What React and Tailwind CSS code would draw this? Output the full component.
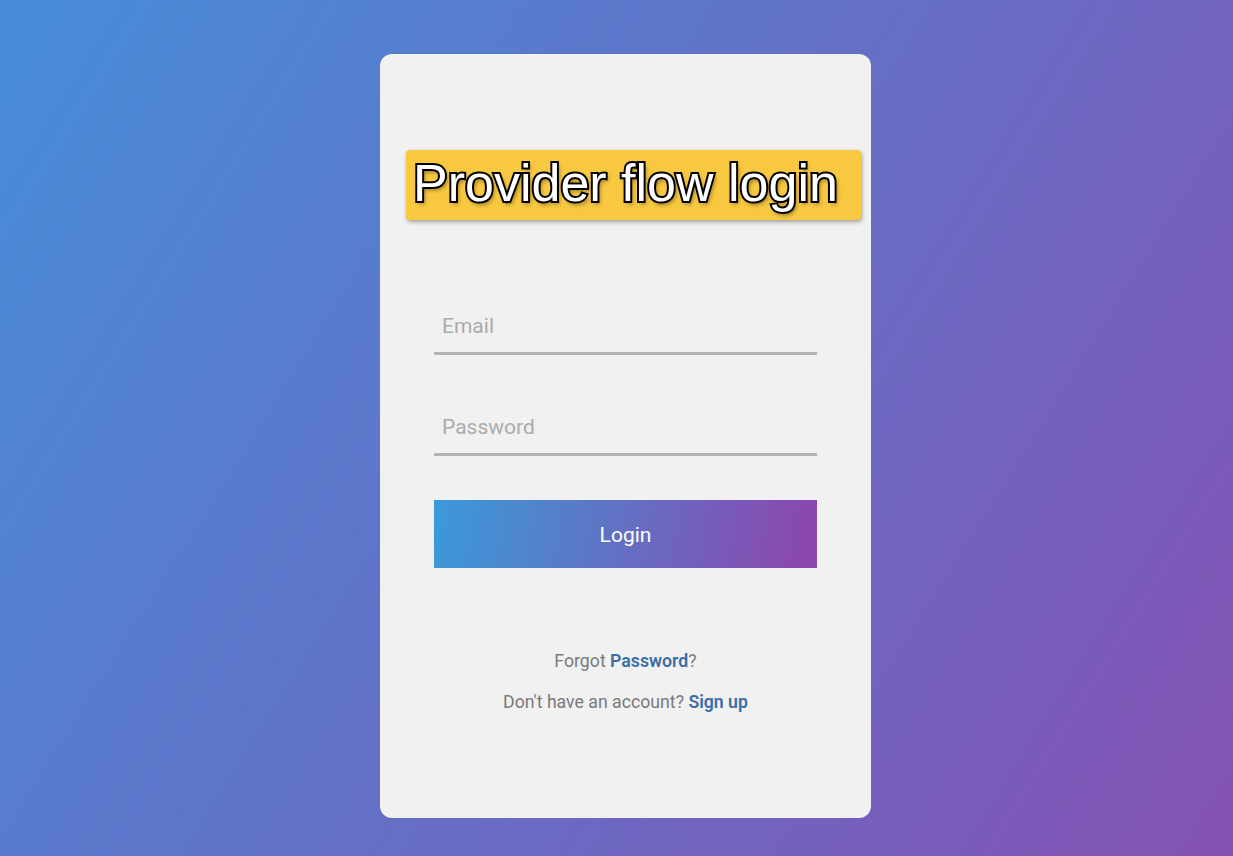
export default function App() {
  return (
    <div className="w-full h-[856px] bg-[linear-gradient(122deg,#468dd8,#8452b4)] flex justify-center pl-[18px] pt-[54px] font-['Roboto',sans-serif] overflow-hidden">
      <div className="w-[491px] h-[764px] bg-[#f1f1f1] rounded-[12px] flex flex-col pt-[96px]">
        {/* title banner */}
        <div className="ml-[26px] mr-[10px] h-[70px] bg-[#f8c840] rounded-[4px] shadow-[1px_2px_4px_rgba(0,0,0,0.35)] flex items-center pl-[7px] pb-[5px]">
          <span className="whitespace-nowrap font-['Liberation_Sans',Arial,sans-serif] text-[52px] leading-none text-white [-webkit-text-stroke:4px_black] [paint-order:stroke_fill] [text-shadow:2px_3px_4px_rgba(0,0,0,0.45)]">
            Provider flow login
          </span>
        </div>

        <div className="px-[54px] flex flex-col">
          <input
            type="email"
            placeholder="Email"
            className="mt-[80px] h-[55px] w-full bg-transparent border-b-[3px] border-[#b4b4b4] pl-2 text-[21px] text-gray-700 placeholder:text-[#ababab] outline-none"
          />
          <input
            type="password"
            placeholder="Password"
            className="mt-[45px] h-[56px] w-full bg-transparent border-b-[3px] border-[#b4b4b4] pl-2 text-[21px] text-gray-700 placeholder:text-[#ababab] outline-none"
          />
          <button className="mt-[44px] h-[68px] w-full bg-[linear-gradient(100deg,#3a9ad9,#8e44ad)] text-white text-[21px] pt-[3px]">
            Login
          </button>

          <p className="mt-[80px] text-center text-[17.7px] leading-[26px] text-[#7a7a7a]">
            Forgot <span className="font-semibold text-[#3b6ea8]">Password</span>?
          </p>
          <p className="mt-[15px] text-center text-[17.7px] leading-[26px] text-[#7a7a7a]">
            Don't have an account? <span className="font-semibold text-[#3b6ea8]">Sign up</span>
          </p>
        </div>
      </div>
    </div>
  );
}
